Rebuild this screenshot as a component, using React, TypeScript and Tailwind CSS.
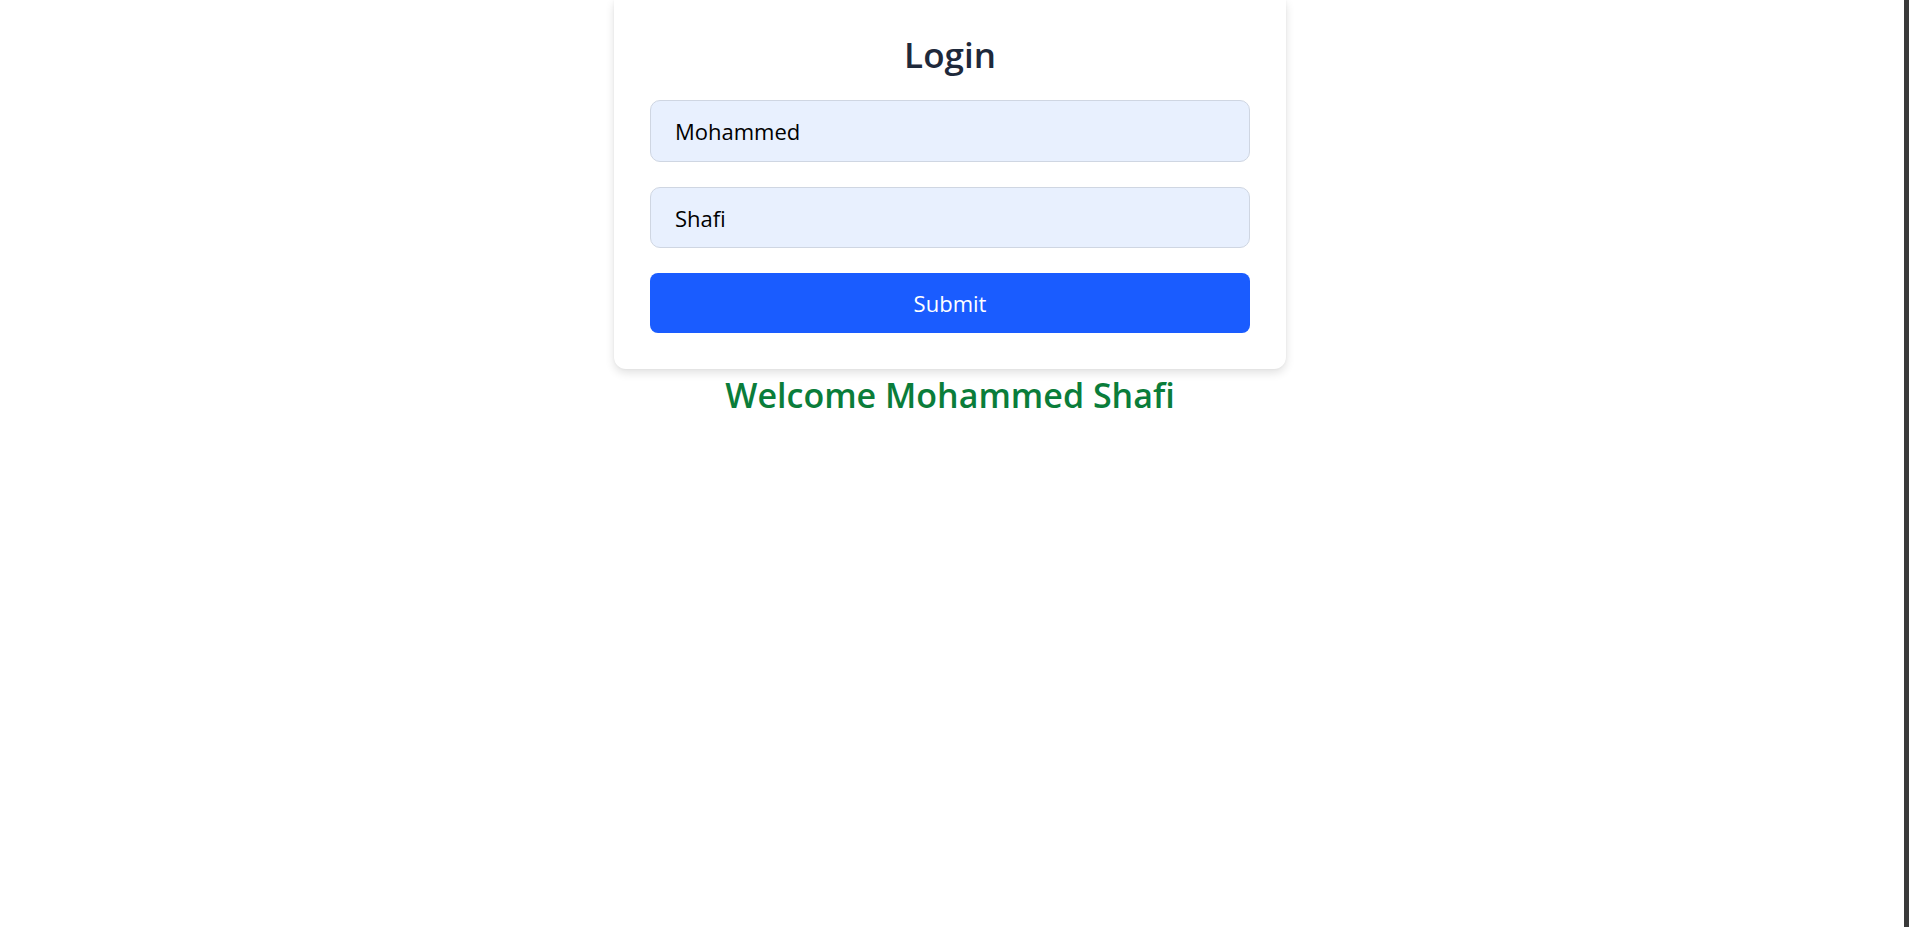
import { useState } from 'react';

export default function App() {
  const [firstName, setFirstName] = useState('Mohammed');
  const [lastName, setLastName] = useState('Shafi');
  const [welcome, setWelcome] = useState('Mohammed Shafi');

  const handleSubmit = (e: React.FormEvent) => {
    e.preventDefault();
    setWelcome(`${firstName} ${lastName}`);
  };

  return (
    <div
      className="flex h-screen w-full bg-white"
      style={{ fontFamily: '"Open Sans", "Noto Sans", sans-serif' }}
    >
      <main className="flex flex-1 flex-col items-center pr-[4px]">
        <form
          onSubmit={handleSubmit}
          className="flex w-[672px] flex-col gap-[25px] rounded-b-xl bg-white px-9 pb-9 pt-[35px] shadow-[0_4px_10px_rgba(0,0,0,0.12),0_0_3px_rgba(0,0,0,0.05)]"
        >
          <h2 className="text-center text-[35px] font-semibold leading-[40px] text-[#1e293b]">
            Login
          </h2>
          <input
            value={firstName}
            onChange={(e) => setFirstName(e.target.value)}
            className="h-[62px] w-full rounded-[10px] border border-[#cfd6e2] bg-[#e8f0fe] px-6 text-[22px] text-black outline-none"
          />
          <input
            value={lastName}
            onChange={(e) => setLastName(e.target.value)}
            className="h-[61px] w-full rounded-[10px] border border-[#cfd6e2] bg-[#e8f0fe] px-6 text-[22px] text-black outline-none"
          />
          <button
            type="submit"
            className="h-[60px] w-full rounded-lg bg-[#1a5cff] text-[22px] text-white"
          >
            Submit
          </button>
        </form>
        <h2 className="mt-[3px] text-[34px] font-semibold leading-[46px] text-[#0a7d3a]">
          Welcome {welcome}
        </h2>
      </main>
      <div className="w-[5px] bg-[#3a3a3a]" />
    </div>
  );
}
